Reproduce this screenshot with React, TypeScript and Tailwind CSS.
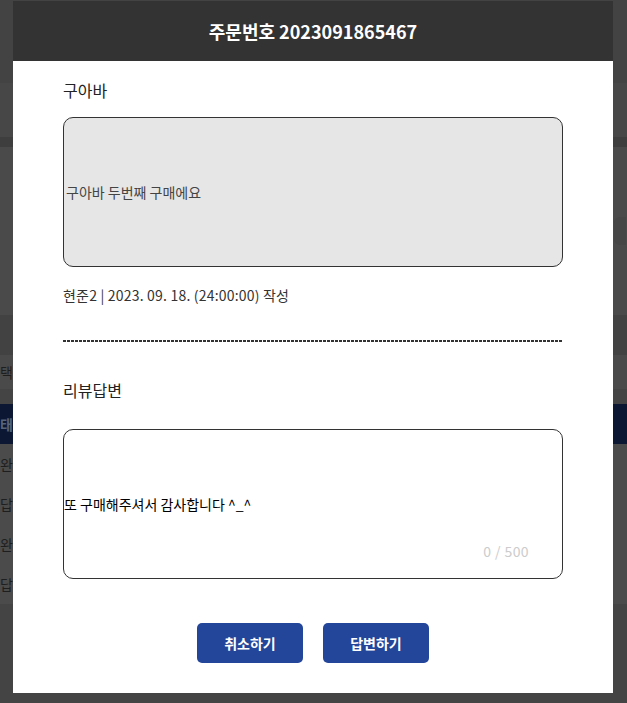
import React from 'react';

const font = { fontFamily: '"Noto Sans CJK KR", "Noto Sans", sans-serif' };

// page behind the dimmed overlay, only the strips at the sides show
const BackgroundPage = () => (
  <div className="flex flex-col w-full text-sm text-[#1e1e1e]">
    <div className="h-[83px] bg-[#434343]" />
    <div className="h-[54px] bg-[#474747]" />
    <div className="h-[10px] bg-[#3e3e3e]" />
    <div className="h-[168px] bg-[#4a4a4a] flex justify-end">
      <div className="mt-[70px] mr-[1px] h-[28px] w-[12px] rounded-l-md bg-[#464646]" />
    </div>
    <div className="h-[40px] bg-[#424242]" />
    <div className="h-[34px] bg-[#4a4a4a] flex items-center">
      <span className="whitespace-nowrap">택 리뷰</span>
    </div>
    <div className="h-[15px] bg-[#444444]" />
    <div className="h-[40px] bg-[#0b1733] flex items-center">
      <span className="font-bold text-[#56657a]">태</span>
    </div>
    <div className="h-[160px] bg-[#4b4b4b] flex flex-col">
      <div className="h-[40px] flex items-center"><span>완료</span></div>
      <div className="h-[40px] flex items-center"><span>답변</span></div>
      <div className="h-[40px] flex items-center"><span>완료</span></div>
      <div className="h-[40px] flex items-center"><span>답변</span></div>
    </div>
    <div className="h-[99px] bg-[#444444]" />
  </div>
);

export default function App() {
  return (
    <div className="relative w-full h-[703px] overflow-hidden bg-[#444444]" style={font}>
      <BackgroundPage />

      <div className="absolute top-[1px] left-[13px] w-[600px] bg-white flex flex-col">
        <div className="h-[60px] bg-[#333333] flex items-center justify-center">
          <h2 className="text-white text-[18px] font-bold leading-none">주문번호 2023091865467</h2>
        </div>

        <div className="px-[50px] pt-[17px] pb-[30px] flex flex-col">
          <div className="h-[24px] flex items-center text-[16px] text-[#222222]">구아바</div>

          <div className="mt-[15px] h-[150px] rounded-[10px] border border-[#333333] bg-[#e6e6e6] flex items-center">
            <p className="pl-[2px] text-sm text-[#444444]">구아바 두번째 구매에요</p>
          </div>

          <div className="mt-[18px] h-[20px] flex items-center text-sm text-[#333333] tracking-[0.2px]">
            현준2 | 2023. 09. 18. (24:00:00) 작성
          </div>

          <div className="mt-[35px] h-[2px] w-full bg-[repeating-linear-gradient(90deg,#333333_0px,#333333_3px,transparent_3px,transparent_4px)]" />

          <div className="mt-[36px] h-[24px] flex items-center text-[16px] text-[#222222]">리뷰답변</div>

          <div className="mt-[27px] h-[150px] rounded-[10px] border border-[#333333] bg-white relative flex items-center">
            <p className="text-sm text-black">또 구매해주셔서 감사합니다 ^_^</p>
            <span className="absolute right-[33px] bottom-[17px] text-sm text-[#cccccc] tracking-[0.4px]">0 / 500</span>
          </div>

          <div className="mt-[44px] flex justify-center gap-[20px]">
            <button className="w-[106px] h-[40px] rounded-[5px] bg-[#23459a] text-white text-sm font-bold">
              취소하기
            </button>
            <button className="w-[106px] h-[40px] rounded-[5px] bg-[#23459a] text-white text-sm font-bold">
              답변하기
            </button>
          </div>
        </div>
      </div>
    </div>
  );
}
